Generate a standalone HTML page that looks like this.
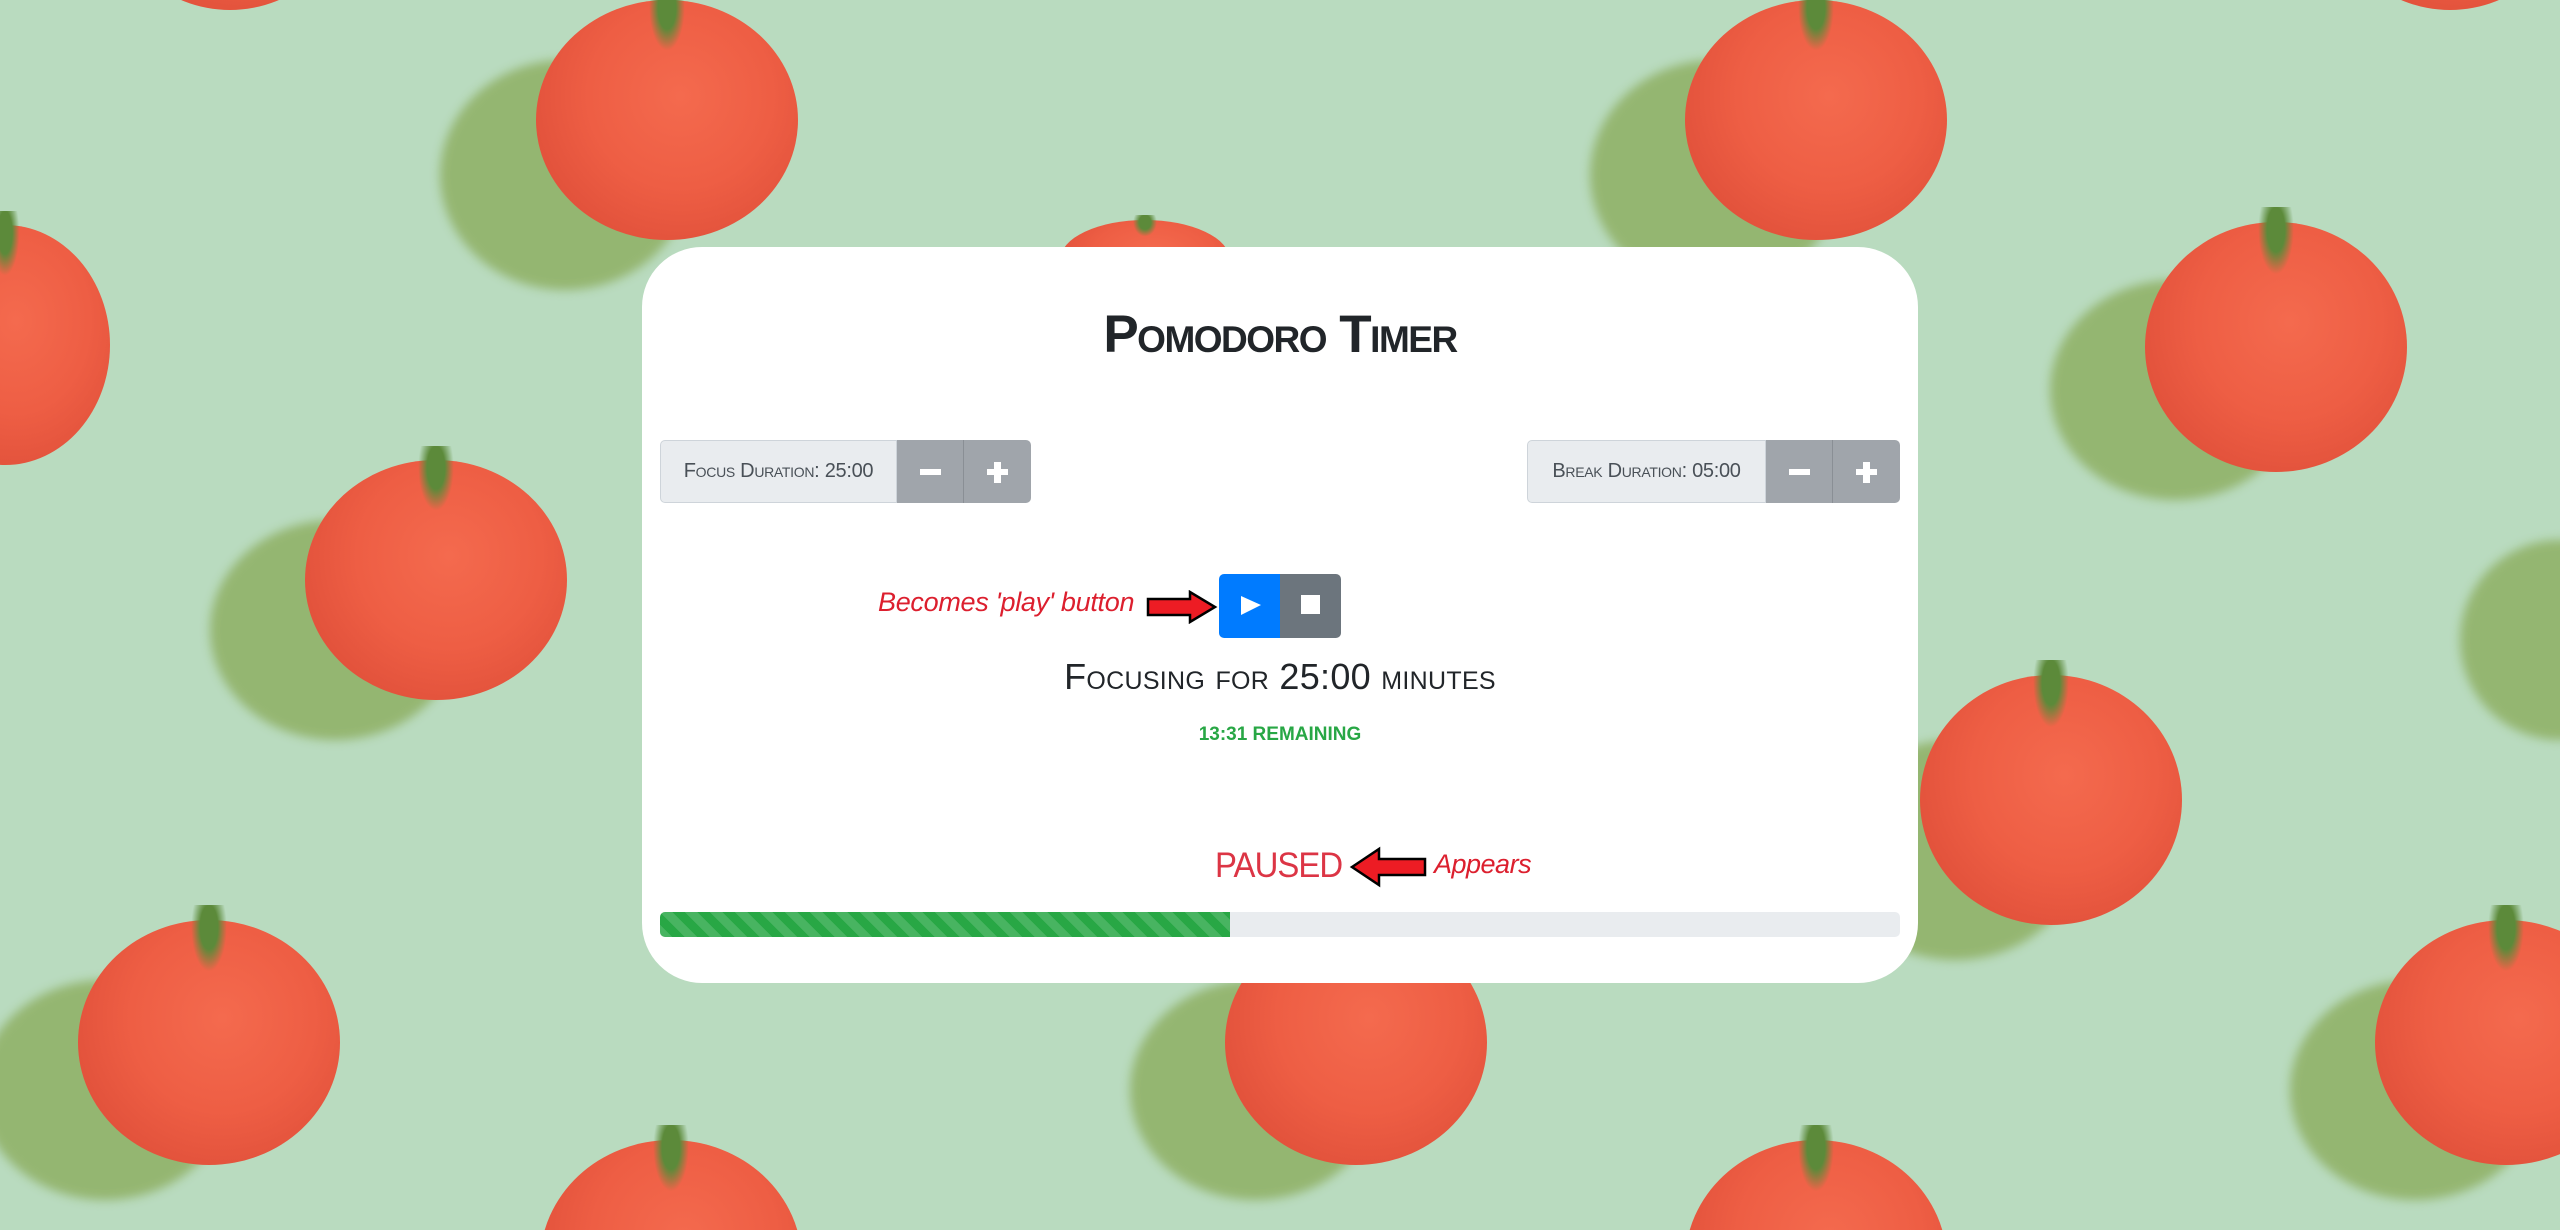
<!DOCTYPE html>
<html><head><meta charset="utf-8"><style>
*{margin:0;padding:0;box-sizing:border-box}
html,body{width:2560px;height:1230px;overflow:hidden}
body{background:#b9dbbf;font-family:"Liberation Sans",sans-serif}
#w{position:relative;width:2560px;height:1230px;overflow:hidden}
.sh{position:absolute;border-radius:50%;background:#8cad5e;opacity:.8;filter:blur(5px)}
.t{position:absolute;border-radius:50%;background:radial-gradient(ellipse at 55% 40%,#f46a4e 0%,#ee5e44 45%,#e0503a 80%,#cf4632 100%)}
.t::after{content:"";position:absolute;left:42%;top:-6%;width:16%;height:30%;background:radial-gradient(ellipse at 50% 30%,#5c8a3a 0 30%,transparent 60%);}
.card{position:absolute;left:642px;top:247px;width:1276px;height:736px;background:#fff;border-radius:60px}
.ab{position:absolute;white-space:nowrap}
.sc{font-variant:small-caps}
.grp{position:absolute;top:440px;height:63px;display:flex}
.lab{background:#e9ecef;border:1px solid #ced4da;border-radius:5px 0 0 5px;color:#495057;font-size:20px;display:flex;align-items:center;justify-content:center;font-variant:small-caps;letter-spacing:-0.3px}
.btn{width:67px;background:#a0a5ab;position:relative}
.btn.m{border-right:1px solid #8a8f95}
.btn.p{border-radius:0 5px 5px 0}
.h{position:absolute;left:23px;top:29px;width:21px;height:6px;background:#fff}
.v{position:absolute;left:30px;top:22px;width:7px;height:21px;background:#fff}
</style></head><body><div id="w">
<div class="sh" style="left:440px;top:60px;width:250px;height:230px"></div>
<div class="t" style="left:536px;top:0px;width:262px;height:240px"></div>
<div class="sh" style="left:1590px;top:60px;width:250px;height:230px"></div>
<div class="t" style="left:1685px;top:0px;width:262px;height:240px"></div>
<div class="t" style="left:-100px;top:225px;width:210px;height:240px"></div>
<div class="sh" style="left:2050px;top:280px;width:250px;height:220px"></div>
<div class="t" style="left:2145px;top:222px;width:262px;height:250px"></div>
<div class="sh" style="left:210px;top:520px;width:250px;height:220px"></div>
<div class="t" style="left:305px;top:460px;width:262px;height:240px"></div>
<div class="sh" style="left:2460px;top:540px;width:200px;height:200px"></div>
<div class="sh" style="left:1830px;top:740px;width:250px;height:220px"></div>
<div class="t" style="left:1920px;top:675px;width:262px;height:250px"></div>
<div class="sh" style="left:-20px;top:980px;width:250px;height:220px"></div>
<div class="t" style="left:78px;top:920px;width:262px;height:245px"></div>
<div class="sh" style="left:1130px;top:980px;width:250px;height:220px"></div>
<div class="t" style="left:1225px;top:920px;width:262px;height:245px"></div>
<div class="sh" style="left:2290px;top:980px;width:250px;height:220px"></div>
<div class="t" style="left:2375px;top:920px;width:262px;height:245px"></div>
<div class="t" style="left:540px;top:1140px;width:262px;height:245px"></div>
<div class="t" style="left:1685px;top:1140px;width:262px;height:245px"></div>
<div class="t" style="left:1060px;top:220px;width:170px;height:80px"></div>
<div class="t" style="left:110px;top:-220px;width:240px;height:230px"></div>
<div class="t" style="left:2330px;top:-220px;width:240px;height:230px"></div>

<div class="card"></div>
<div class="ab sc" style="left:0;width:2560px;text-align:center;top:304px;font-size:53px;color:#212529;font-weight:bold;letter-spacing:-1.5px">Pomodoro Timer</div>

<div class="grp" style="left:660px"><div class="lab" style="width:237px">Focus Duration: 25:00</div><div class="btn m"><div class="h"></div></div><div class="btn p"><div class="h"></div><div class="v"></div></div></div>
<div class="grp" style="left:1527px"><div class="lab" style="width:239px">Break Duration: 05:00</div><div class="btn m"><div class="h"></div></div><div class="btn p"><div class="h"></div><div class="v"></div></div></div>

<div class="ab" style="left:878px;top:587px;font-size:27px;font-style:italic;color:#dc1f2e;letter-spacing:-0.3px">Becomes 'play' button</div>
<svg class="ab" style="left:1146px;top:590px" width="72" height="34"><path d="M2 9H44V2L69 17L44 32V25H2Z" fill="#ed1c24" stroke="#000" stroke-width="2.5"/></svg>
<div class="ab" style="left:1219px;top:574px;width:61px;height:64px;background:#007bff;border-radius:5px 0 0 5px"></div>
<div class="ab" style="left:1280px;top:574px;width:61px;height:64px;background:#6c757d;border-radius:0 5px 5px 0"></div>
<svg class="ab" style="left:1240px;top:595px" width="22" height="22"><path d="M1 1L21 10L1 20Z" fill="#fff"/></svg>
<div class="ab" style="left:1301px;top:595px;width:19px;height:19px;background:#fff"></div>

<div class="ab sc" style="left:0;width:2560px;text-align:center;top:656px;font-size:36px;color:#212529;letter-spacing:0.3px">Focusing for 25:00 minutes</div>
<div class="ab" style="left:0;width:2560px;text-align:center;top:724px;font-size:19px;font-weight:bold;color:#28a745">13:31 REMAINING</div>

<div class="ab" style="left:1215px;top:846px;font-size:35px;color:#dc3545;letter-spacing:-1px;transform:scaleX(0.94);transform-origin:left">PAUSED</div>
<svg class="ab" style="left:1349px;top:846px" width="80" height="42"><path d="M3 21L30 3V13H76V29H30V39Z" fill="#ed1c24" stroke="#000" stroke-width="2.5"/></svg>
<div class="ab" style="left:1434px;top:849px;font-size:27px;font-style:italic;color:#dc1f2e;letter-spacing:-0.5px">Appears</div>

<div class="ab" style="left:660px;top:912px;width:1240px;height:25px;background:#e9ecef;border-radius:5px;overflow:hidden"><div style="width:570px;height:25px;background-color:#28a745;background-image:linear-gradient(45deg,rgba(255,255,255,.15) 25%,transparent 25%,transparent 50%,rgba(255,255,255,.15) 50%,rgba(255,255,255,.15) 75%,transparent 75%,transparent);background-size:25px 25px"></div></div>
</div></body></html>
